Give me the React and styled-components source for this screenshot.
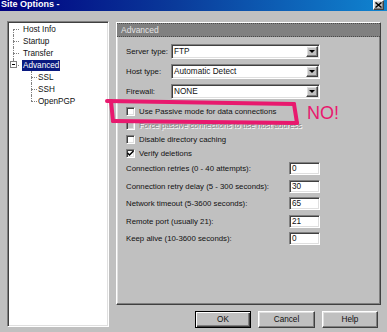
import React from 'react'
import styled, {createGlobalStyle, css} from 'styled-components'

const GlobalStyle = createGlobalStyle`
  html, body {
    margin: 0;
    padding: 0;
    background: #c0c0c0;
  }
  body {
    font-family: "Liberation Sans", Arial, sans-serif;
  }
`

const sunken = css`
  border: 1px solid;
  border-color: #808080 #fff #fff #808080;
  box-shadow: inset 1px 1px 0 #404040, inset -1px -1px 0 #dfdfdf;
`

const raised = css`
  border: 1px solid;
  border-color: #fff #404040 #404040 #fff;
  box-shadow: inset -1px -1px 0 #808080, inset 1px 1px 0 #dfdfdf;
`

const treeItems = [
  {label: 'Host Info', level: 0, first: true},
  {label: 'Startup', level: 0},
  {label: 'Transfer', level: 0},
  {label: 'Advanced', level: 0, last: true, expanded: true, selected: true},
  {label: 'SSL', level: 1},
  {label: 'SSH', level: 1},
  {label: 'OpenPGP', level: 1, last: true},
]

const selects = [
  {label: 'Server type:', value: 'FTP'},
  {label: 'Host type:', value: 'Automatic Detect'},
  {label: 'Firewall:', value: 'NONE'},
]

const checks = [
  {label: 'Use Passive mode for data connections'},
  {label: 'Force passive connections to use host address', disabled: true},
  {label: 'Disable directory caching'},
  {label: 'Verify deletions', checked: true},
]

const numbers = [
  {label: 'Connection retries (0 - 40 attempts):', value: '0'},
  {label: 'Connection retry delay (5 - 300 seconds):', value: '30'},
  {label: 'Network timeout (5-3600 seconds):', value: '65'},
  {label: 'Remote port (usually 21):', value: '21'},
  {label: 'Keep alive (10-3600 seconds):', value: '0'},
]

export default function App() {
  return (
    <>
      <GlobalStyle/>
      <Window>
        <TitleBar>
          <Title>Site Options -</Title>
          <CloseButton>
            <svg width="7" height="6" viewBox="0 0 7 6">
              <path d="M0.5 0.5 L6.5 5.5 M6.5 0.5 L0.5 5.5" stroke="#000" strokeWidth="1.4"/>
            </svg>
          </CloseButton>
        </TitleBar>

        <Body>
          <Tree>
            {treeItems.map(item => (
              <TreeRow
                key={item.label}
                $level={item.level}
                $first={item.first}
                $last={item.last}>
                {item.expanded && <ExpandBox/>}
                <TreeLabel $selected={item.selected}>{item.label}</TreeLabel>
              </TreeRow>
            ))}
          </Tree>

          <Side>
            <GroupBox>
              <GroupHeader>Advanced</GroupHeader>
              <Form>
                {selects.map(s => (
                  <SelectRow key={s.label}>
                    <SelectLabel>{s.label}</SelectLabel>
                    <Select>
                      <span>{s.value}</span>
                      <DropButton><Arrow/></DropButton>
                    </Select>
                  </SelectRow>
                ))}

                <CheckList>
                  {checks.map(c => (
                    <CheckRow key={c.label} $disabled={c.disabled}>
                      <CheckBox $disabled={c.disabled}>
                        {c.checked && (
                          <svg width="7" height="7" viewBox="0 0 7 7">
                            <path d="M0.5 3 L2.5 5 L6.5 1" fill="none" stroke="#000" strokeWidth="1.5"/>
                          </svg>
                        )}
                      </CheckBox>
                      <span>{c.label}</span>
                    </CheckRow>
                  ))}
                </CheckList>

                {numbers.map(n => (
                  <NumberRow key={n.label}>
                    <span>{n.label}</span>
                    <NumberInput>{n.value}</NumberInput>
                  </NumberRow>
                ))}
              </Form>
            </GroupBox>

            <ButtonRow>
              <Button $default $width={56}>OK</Button>
              <Button $width={57}>Cancel</Button>
              <Button $width={56}>Help</Button>
            </ButtonRow>
          </Side>
        </Body>

        <Scribble width="387" height="332" viewBox="0 0 387 332">
          <g fill="none" stroke="#e8196e" strokeWidth="4" strokeLinecap="round">
            <path d="M107 101 L294 104"/>
            <path d="M294 104 L297 123"/>
            <path d="M297 123 L113 121"/>
            <path d="M111 101 L113 121"/>
          </g>
        </Scribble>
        <No>NO!</No>
      </Window>
    </>
  )
}

const Window = styled.div`
  position: relative;
  width: 387px;
  height: 332px;
  overflow: hidden;
  background: #c0c0c0;
  font-family: "Liberation Sans", Arial, sans-serif;
  font-size: 7.8px;
  color: #111;
  display: flex;
  flex-direction: column;
`

const TitleBar = styled.div`
  height: 11px;
  flex-shrink: 0;
  background: linear-gradient(90deg, #000080 0%, #0a3a9a 45%, #1084d0 100%);
  display: flex;
  align-items: center;
  justify-content: space-between;
  padding: 0 3px 0 1px;
`

const Title = styled.span`
  color: #fff;
  font-weight: bold;
  font-size: 9px;
  line-height: 9px;
  margin-top: -2px;
`

const CloseButton = styled.span`
  box-sizing: border-box;
  width: 11px;
  height: 10px;
  margin-top: -1px;
  background: #c0c0c0;
  ${raised};
  display: flex;
  align-items: center;
  justify-content: center;
`

const Body = styled.div`
  display: flex;
  padding: 10px 0 0 7px;
`

const Tree = styled.div`
  box-sizing: border-box;
  width: 102px;
  height: 306px;
  background: #fff;
  ${sunken};
  padding-top: 1px;
  font-size: 8.2px;
`

const TreeRow = styled.div`
  position: relative;
  height: 12px;
  display: flex;
  align-items: center;
  padding-left: ${p => (p.$level ? 29 : 14)}px;

  &::before {
    content: '';
    position: absolute;
    left: ${p => (p.$level ? 23 : 5)}px;
    top: 6px;
    width: 6px;
    border-top: 1px dotted #808080;
  }

  &::after {
    content: '';
    position: absolute;
    left: ${p => (p.$level ? 23 : 5)}px;
    top: ${p => (p.$first ? 6 : 0)}px;
    height: ${p => (p.$first || p.$last ? 6 : 12)}px;
    border-left: 1px dotted #808080;
  }
`

const ExpandBox = styled.span`
  position: absolute;
  z-index: 1;
  left: 2px;
  top: 2px;
  box-sizing: border-box;
  width: 7px;
  height: 7px;
  background: #fff;
  border: 1px solid #808080;

  &::after {
    content: '';
    position: absolute;
    left: 1px;
    top: 2px;
    width: 3px;
    border-top: 1px solid #000;
  }
`

const TreeLabel = styled.span`
  padding: 0 1px;
  line-height: 11px;
  background: ${p => (p.$selected ? '#0a1a80' : 'transparent')};
  color: ${p => (p.$selected ? '#fff' : '#111')};
`

const Side = styled.div`
  display: flex;
  flex-direction: column;
  margin-left: 7px;
  width: 265px;
`

const GroupBox = styled.div`
  box-sizing: border-box;
  height: 283px;
  margin-top: 1px;
  ${raised};
`

const GroupHeader = styled.div`
  height: 14px;
  box-sizing: border-box;
  background: #808080;
  color: #e4e4e4;
  border-top: 1px dotted #4a4a4a;
  border-bottom: 1px dotted #4a4a4a;
  padding-left: 4px;
  display: flex;
  align-items: center;
  font-size: 8.5px;
`

const Form = styled.div`
  padding: 7px 0 0 9px;
  width: 194px;
`

const SelectRow = styled.div`
  display: flex;
  align-items: center;
  height: 15px;
  margin-bottom: 5px;
`

const SelectLabel = styled.span`
  width: 45px;
`

const Select = styled.div`
  box-sizing: border-box;
  width: 149px;
  height: 15px;
  background: #fff;
  ${sunken};
  display: flex;
  align-items: center;
  padding-left: 2px;
  font-size: 8.2px;
`

const DropButton = styled.span`
  box-sizing: border-box;
  margin-left: auto;
  margin-right: 1px;
  width: 12px;
  height: 11px;
  background: #c0c0c0;
  ${raised};
  display: flex;
  align-items: center;
  justify-content: center;
`

const Arrow = styled.span`
  width: 0;
  height: 0;
  border-left: 3px solid transparent;
  border-right: 3px solid transparent;
  border-top: 3px solid #000;
`

const CheckList = styled.div`
  margin-top: 1px;
`

const CheckRow = styled.div`
  display: flex;
  align-items: center;
  height: 14px;
  gap: 4px;
  color: ${p => (p.$disabled ? '#808080' : '#111')};
  text-shadow: ${p => (p.$disabled ? '1px 1px 0 #fff' : 'none')};
`

const CheckBox = styled.span`
  box-sizing: border-box;
  width: 9px;
  height: 9px;
  background: ${p => (p.$disabled ? '#c0c0c0' : '#fff')};
  ${sunken};
  display: flex;
  align-items: center;
  justify-content: center;
`

const NumberRow = styled.div`
  display: flex;
  align-items: center;
  justify-content: space-between;
  height: 17.5px;
`

const NumberInput = styled.span`
  box-sizing: border-box;
  width: 31px;
  height: 13px;
  background: #fff;
  ${sunken};
  padding-left: 2px;
  display: flex;
  align-items: center;
  font-size: 8.2px;
`

const ButtonRow = styled.div`
  display: flex;
  justify-content: flex-end;
  gap: 7px;
  margin-top: 6px;
  padding-right: 3px;
`

const Button = styled.span`
  box-sizing: border-box;
  width: ${p => p.$width}px;
  height: 17px;
  background: #c0c0c0;
  display: flex;
  align-items: center;
  justify-content: center;
  font-size: 8.2px;
  ${raised};
  ${p => p.$default && css`
    border-color: #000;
    box-shadow: inset 1px 1px 0 #fff, inset -1px -1px 0 #404040, inset -2px -2px 0 #808080;
  `}
`

const Scribble = styled.svg`
  position: absolute;
  left: 0;
  top: 0;
  pointer-events: none;
`

const No = styled.span`
  position: absolute;
  left: 307px;
  top: 104px;
  font-family: "Liberation Sans", Arial, sans-serif;
  font-size: 18px;
  line-height: 18px;
  color: #e8196e;
`
